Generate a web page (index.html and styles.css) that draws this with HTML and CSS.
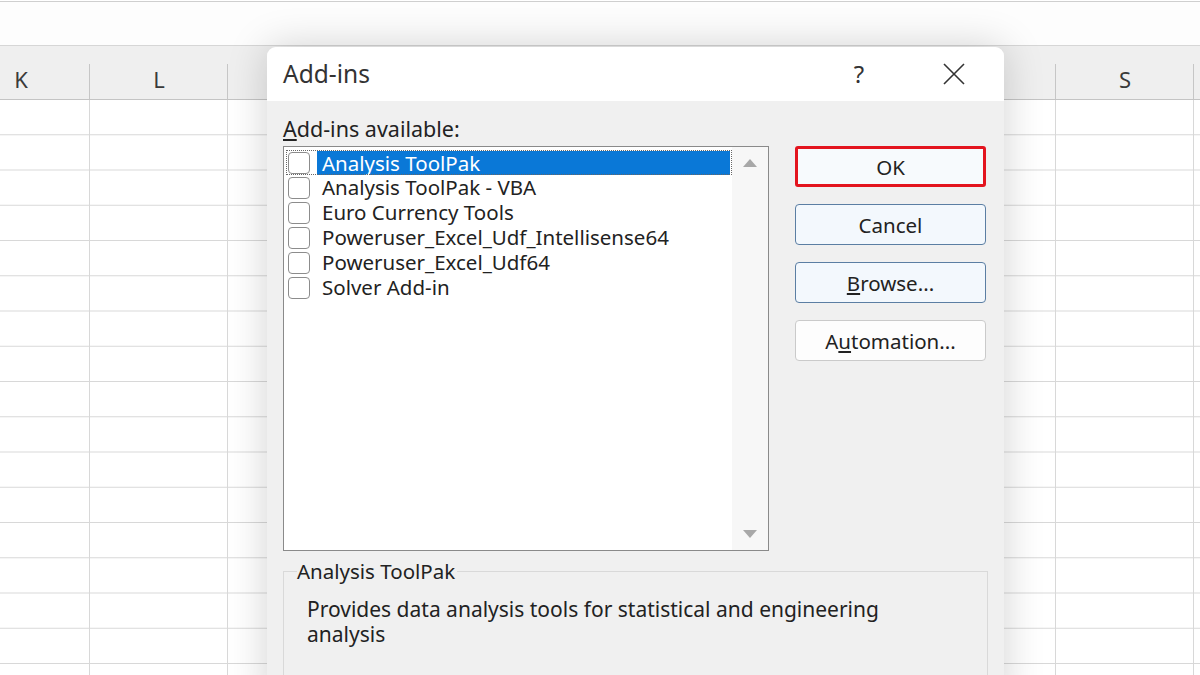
FILE: index.html
```html
<!DOCTYPE html>
<html lang="en">
<head>
    <meta charset="UTF-8">
    <meta name="viewport" content="width=device-width, initial-scale=1.0">
    <title>Add-ins</title>
    <link rel="stylesheet" href="styles.css">
</head>
<body>
    <div class="sheet">
        <div class="topbar"></div>
        <div class="colheads">
            <div class="colhead">K</div>
            <div class="colhead">L</div>
            <div class="colhead">M</div>
            <div class="colhead">N</div>
            <div class="colhead">O</div>
            <div class="colhead">P</div>
            <div class="colhead">Q</div>
            <div class="colhead">R</div>
            <div class="colhead">S</div>
            <div class="colhead"></div>
        </div>
        <div class="cells"></div>
    </div>

    <div class="dialog">
        <div class="titlebar">
            <span class="title">Add-ins</span>
            <span class="help">?</span>
            <span class="close">
                <svg width="24" height="24" viewBox="0 0 24 24"><path d="M2 2 L22 22 M22 2 L2 22" stroke="#333" stroke-width="1.6" fill="none"/></svg>
            </span>
        </div>
        <div class="body">
            <div class="label"><u>A</u>dd-ins available:</div>
            <div class="main">
                <div class="listbox">
                    <ul class="items">
                        <li class="item selected"><span class="check"></span><span class="name">Analysis ToolPak</span></li>
                        <li class="item"><span class="check"></span><span class="name">Analysis ToolPak - VBA</span></li>
                        <li class="item"><span class="check"></span><span class="name">Euro Currency Tools</span></li>
                        <li class="item"><span class="check"></span><span class="name">Poweruser_Excel_Udf_Intellisense64</span></li>
                        <li class="item"><span class="check"></span><span class="name">Poweruser_Excel_Udf64</span></li>
                        <li class="item"><span class="check"></span><span class="name">Solver Add-in</span></li>
                    </ul>
                    <div class="scrollbar">
                        <span class="arrow up"></span>
                        <span class="arrow down"></span>
                    </div>
                </div>
                <div class="buttons">
                    <button class="btn ok">OK</button>
                    <button class="btn blue">Cancel</button>
                    <button class="btn blue"><u>B</u>rowse...</button>
                    <button class="btn">A<u>u</u>tomation...</button>
                </div>
            </div>
            <fieldset class="desc">
                <legend>Analysis ToolPak</legend>
                <p>Provides data analysis tools for statistical and engineering analysis</p>
            </fieldset>
        </div>
    </div>
</body>
</html>
```

FILE: styles.css
```css
body {
    margin: 0;
    padding: 0;
    width: 1200px;
    height: 675px;
    overflow: hidden;
    position: relative;
    background-color: #ffffff;
    font-family: "Noto Sans", "Open Sans", sans-serif;
    color: #222;
}
.sheet {
    height: 675px;
    overflow: hidden;
}
.topbar {
    height: 43px;
    border-top: 1px solid #cfcfcf;
    margin-top: 1px;
    background-color: #fdfdfd;
}
.colheads {
    display: flex;
    height: 53px;
    margin-left: -48px;
    background-color: #efefef;
    border-top: 1px solid #d6d6d6;
    border-bottom: 1px solid #c4c4c4;
}
.colhead {
    flex: 0 0 138px;
    position: relative;
    text-align: center;
    line-height: 66px;
    font-size: 22px;
    color: #3a3a3a;
}
.colhead::after {
    content: "";
    position: absolute;
    right: 0;
    top: 18px;
    bottom: 0;
    width: 1px;
    background-color: #c6c6c6;
}
.cells {
    height: 600px;
    background-image:
        linear-gradient(to bottom, transparent 34.25px, #d8d8d8 34.25px),
        linear-gradient(to right, transparent 137px, #d8d8d8 137px);
    background-size: 100% 35.25px, 138px 100%;
    background-position: 0 0, -48px 0;
}

.dialog {
    position: absolute;
    left: 267px;
    top: 47px;
    width: 737px;
    height: 660px;
    background-color: #f0f0f0;
    border-radius: 9px 9px 0 0;
    box-shadow: 0 0 40px rgba(0, 0, 0, 0.18);
    overflow: hidden;
}
.titlebar {
    height: 54px;
    background-color: #ffffff;
    display: flex;
    align-items: center;
    padding-left: 16px;
}
.title {
    font-size: 24.5px;
    line-height: 30px;
    color: #333;
    flex: 1;
}
.help {
    font-size: 24px;
    line-height: 30px;
    color: #333;
    width: 30px;
    text-align: center;
    margin-right: 68px;
}
.close {
    display: flex;
    margin-right: 38px;
}
.body {
    padding: 13px 16px 0 16px;
}
.label {
    font-size: 21.5px;
    line-height: 30px;
    color: #222;
    height: 32px;
}
.main {
    display: flex;
    gap: 26px;
}
.listbox {
    display: flex;
    width: 486px;
    height: 405px;
    box-sizing: border-box;
    border: 1px solid #8a8a8a;
    background-color: #ffffff;
}
.items {
    list-style: none;
    margin: 0;
    padding: 3px 0 0 2px;
    flex: 1;
}
.item {
    display: flex;
    align-items: center;
    height: 25px;
    font-size: 20.5px;
    line-height: 25px;
    color: #222;
}
.check {
    flex: 0 0 22px;
    height: 22px;
    box-sizing: border-box;
    border: 1px solid #8c8c8c;
    border-radius: 4px;
    margin-left: 2px;
    margin-right: 12px;
    background-color: #fff;
}
.selected {
    outline: 1px dotted #666;
    outline-offset: -1px;
}
.selected .name {
    background-color: #0a78d7;
    color: #ffffff;
    flex: 1;
    margin-left: -5px;
    padding-left: 5px;
    margin-right: 2px;
    line-height: 24px;
}
.scrollbar {
    width: 36px;
    background-color: #f7f7f7;
    display: flex;
    flex-direction: column;
    justify-content: space-between;
    align-items: center;
    padding: 12px 0 12px 0;
}
.arrow {
    width: 0;
    height: 0;
    border-left: 7px solid transparent;
    border-right: 7px solid transparent;
}
.up {
    border-bottom: 8px solid #a8a8a8;
}
.down {
    border-top: 8px solid #a8a8a8;
}
.buttons {
    display: flex;
    flex-direction: column;
    gap: 17px;
    width: 191px;
}
.btn {
    height: 41px;
    font-family: "Noto Sans", "Open Sans", sans-serif;
    font-size: 20.5px;
    color: #222;
    background-color: #fdfdfd;
    border: 1px solid #cacaca;
    border-radius: 4px;
    padding: 0;
}
.blue {
    background-color: #f3f8fd;
    border-color: #5b7ea3;
}
.ok {
    background-color: #f7fafd;
    border: 3px solid #e3141e;
    border-radius: 3px;
}
.desc {
    margin: 6px 0 0 0;
    padding: 2px 20px 0 23px;
    border: 1px solid #d9d9d9;
    height: 120px;
}
.desc legend {
    font-size: 20.5px;
    line-height: 28px;
    color: #222;
    padding: 0 2px 0 0;
    margin-left: -10px;
}
.desc p {
    margin: 10px 0 0 0;
    font-size: 21px;
    line-height: 25px;
    color: #222;
    width: 640px;
}
```
